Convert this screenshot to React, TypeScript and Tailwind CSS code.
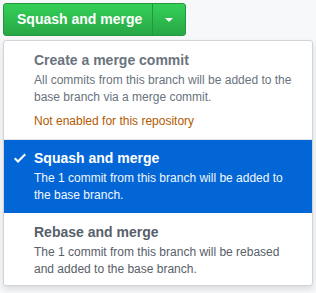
import React from "react";

function Check() {
  return (
    <svg width="12" height="16" viewBox="0 0 12 16" fill="currentColor" className="absolute left-[10px] top-[10px]">
      <path fillRule="evenodd" d="M12 5l-8 8-4-4 1.5-1.5L4 10l6.5-6.5L12 5z" />
    </svg>
  );
}

export default function App() {
  return (
    <div className="w-[316px] h-[293px] bg-[#f6f8fa] relative overflow-hidden" style={{ fontFamily: '"Liberation Sans", Arial, sans-serif' }}>
      <div className="absolute left-[3px] top-[3px] flex h-[33px] rounded-[3px] border border-[#23973e] bg-gradient-to-b from-[#34d058] to-[#28a745] text-white font-bold text-[14px]">
        <div className="flex items-center pl-[13px] w-[149px] whitespace-nowrap border-r border-[#23973e]">Squash and merge</div>
        <div className="flex items-center justify-center w-[32px]">
          <svg width="8" height="4" viewBox="0 0 8 4"><path d="M0 0h8L4 4z" fill="white" /></svg>
        </div>
      </div>
      <div className="absolute left-[3px] top-[40px] w-[310px] bg-white border border-[#d1d5da] rounded-[3px] shadow-[0_3px_6px_rgba(0,0,0,0.12)]">
        <div className="relative pl-[30px] pr-[10px] pt-[9px] pb-[9px]">
          <div className="text-[14px] font-bold leading-[20px] text-[#6a737d]">Create a merge commit</div>
          <div className="text-[12px] leading-[17px] text-[#6a737d] mt-[2px]">All commits from this branch will be added to the base branch via a merge commit.</div>
          <div className="text-[12px] leading-[17px] text-[#b35a00] mt-[7px]">Not enabled for this repository</div>
        </div>
        <div className="relative pl-[30px] pr-[10px] pt-[8px] pb-[9px] bg-[#0366d6] text-white border-t border-[#e1e4e8]">
          <Check />
          <div className="text-[14px] font-bold leading-[20px]">Squash and merge</div>
          <div className="text-[12px] leading-[17px] text-[#f1f8ff] mt-[2px]">The 1 commit from this branch will be added to the base branch.</div>
        </div>
        <div className="relative pl-[30px] pr-[10px] pt-[9px] pb-[7px]">
          <div className="text-[14px] font-bold leading-[20px] text-[#586069]">Rebase and merge</div>
          <div className="text-[12px] leading-[17px] text-[#586069] mt-[2px]">The 1 commit from this branch will be rebased and added to the base branch.</div>
        </div>
      </div>
    </div>
  );
}
